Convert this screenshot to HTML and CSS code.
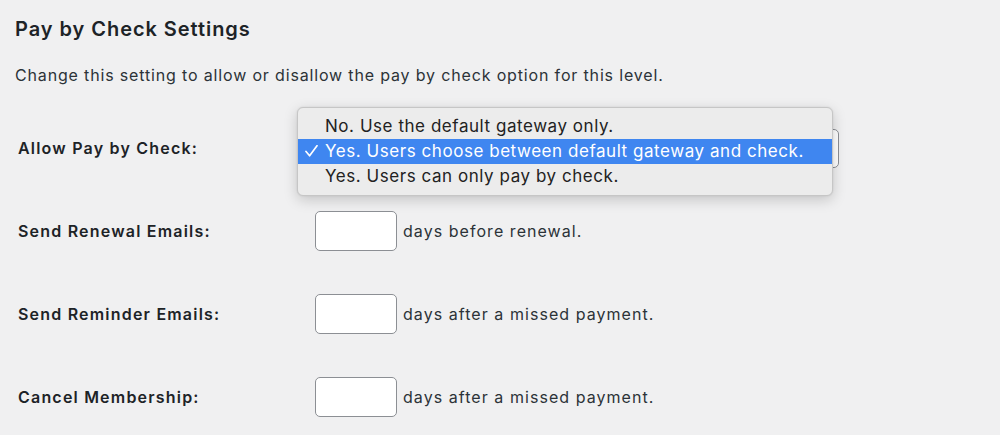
FILE: index.html
```html
<!DOCTYPE html>
<html lang="en">
<head>
<meta charset="utf-8">
<title>Pay by Check Settings</title>
<link rel="stylesheet" href="styles.css">
</head>
<body>
<div class="wrap">
  <h2 class="title">Pay by Check Settings</h2>
  <p class="desc">Change this setting to allow or disallow the pay by check option for this level.</p>
  <div class="form">
    <div class="row">
      <div class="label">Allow Pay by Check:</div>
      <div class="field">
        <div class="select"></div>
        <ul class="menu">
          <li class="opt">No. Use the default gateway only.</li>
          <li class="opt sel"><svg class="check" width="13" height="12" viewBox="0 0 13 12"><polyline points="1,6.5 4.6,10.8 12,0.8" fill="none" stroke="#fff" stroke-width="1.7" stroke-linecap="round" stroke-linejoin="round"/></svg>Yes. Users choose between default gateway and check.</li>
          <li class="opt">Yes. Users can only pay by check.</li>
        </ul>
      </div>
    </div>
    <div class="row">
      <div class="label">Send Renewal Emails:</div>
      <div class="field"><span class="input"></span><span class="after">days before renewal.</span></div>
    </div>
    <div class="row">
      <div class="label">Send Reminder Emails:</div>
      <div class="field"><span class="input"></span><span class="after">days after a missed payment.</span></div>
    </div>
    <div class="row">
      <div class="label">Cancel Membership:</div>
      <div class="field"><span class="input"></span><span class="after">days after a missed payment.</span></div>
    </div>
  </div>
</div>
</body>
</html>
```

FILE: styles.css
```css
html, body {
  margin: 0;
  padding: 0;
  background: #f0f0f1;
}
body {
  font-family: Inter, "Liberation Sans", Arial, sans-serif;
  color: #1d2327;
  width: 1000px;
  height: 435px;
  overflow: hidden;
}
.wrap {
  padding: 0 0 0 15px;
}
.title {
  margin: 0;
  padding-top: 17px;
  font-size: 20px;
  line-height: 24px;
  font-weight: 600;
  letter-spacing: 0.95px;
  color: #1d2327;
}
.desc {
  margin: 0;
  padding-top: 24px;
  font-size: 16px;
  line-height: 20px;
  letter-spacing: 0.84px;
  color: #2c3338;
}
.form {
  padding-top: 43px;
  display: flex;
  flex-direction: column;
  gap: 43px;
}
.row {
  display: flex;
  align-items: center;
  height: 40px;
}
.label {
  box-sizing: border-box;
  width: 300px;
  padding-left: 3px;
  font-size: 16px;
  font-weight: 600;
  letter-spacing: 1.2px;
  color: #1d2327;
}
.field {
  position: relative;
  display: flex;
  align-items: center;
  height: 40px;
}
.select {
  width: 522px;
  height: 37px;
  border: 1px solid #8c8f94;
  border-radius: 5px;
  background: #fff;
}
.menu {
  position: absolute;
  left: -18px;
  top: -21px;
  width: 534px;
  margin: 0;
  padding: 6px 0;
  list-style: none;
  background: #ececec;
  border: 1px solid #c6c6c6;
  border-radius: 6px;
  box-shadow: 0 4px 14px rgba(0,0,0,0.18), 0 0 2px rgba(0,0,0,0.1);
}
.opt {
  position: relative;
  height: 25px;
  line-height: 25px;
  padding-left: 27px;
  font-size: 17px;
  letter-spacing: 0.55px;
  color: #222;
}
.opt.sel {
  background: #3f86f0;
  color: #fff;
}
.check {
  position: absolute;
  left: 7px;
  top: 6px;
}
.input {
  display: inline-block;
  box-sizing: border-box;
  width: 82px;
  height: 40px;
  border: 1px solid #8c8f94;
  border-radius: 5px;
  background: #fff;
}
.after {
  margin-left: 6px;
  font-size: 16px;
  letter-spacing: 1.05px;
  color: #2c3338;
}
```
